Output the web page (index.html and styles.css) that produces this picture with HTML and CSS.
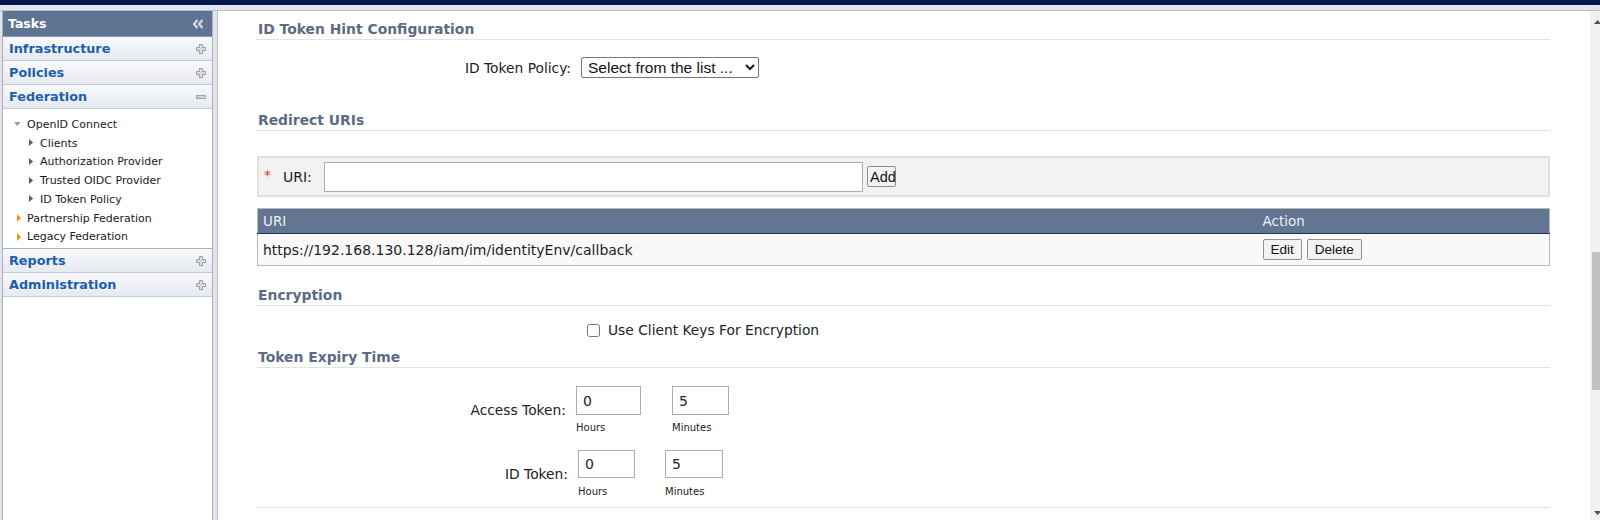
FILE: index.html
```html
<!DOCTYPE html>
<html lang="en">
<head>
<meta charset="utf-8">
<title>Federation - OpenID Connect</title>
<link rel="stylesheet" href="styles.css">
</head>
<body>
<div class="topbar"></div>
<div class="subbar"></div>
<div class="layout">
  <aside class="sidebar">
    <div class="tasks">
      <span>Tasks</span>
      <svg class="collapse" width="12" height="10" viewBox="0 0 12 10"><polyline points="5.5,1 2,5 5.5,9" fill="none" stroke="#d7dde6" stroke-width="2.2"/><polyline points="10.5,1 7,5 10.5,9" fill="none" stroke="#d7dde6" stroke-width="2.2"/></svg>
    </div>
    <div class="nav-row"><span>Infrastructure</span><svg class="plus" width="10" height="10" viewBox="0 0 10 10"><path d="M3.5 0.5h3v3h3v3h-3v3h-3v-3h-3v-3h3z" fill="#dcdcdc" stroke="#9d9d9d"/></svg></div>
    <div class="nav-row"><span>Policies</span><svg class="plus" width="10" height="10" viewBox="0 0 10 10"><path d="M3.5 0.5h3v3h3v3h-3v3h-3v-3h-3v-3h3z" fill="#dcdcdc" stroke="#9d9d9d"/></svg></div>
    <div class="nav-row"><span>Federation</span><svg class="plus" width="10" height="10" viewBox="0 0 10 10"><rect x="0.5" y="3.5" width="9" height="3" fill="#d0d0d0" stroke="#a3a3a3"/></svg></div>
    <div class="tree">
      <div class="tree-item lvl1"><span class="ti"><svg width="14" height="10" viewBox="0 0 14 10"><polygon points="2,3 8.5,3 5.25,7" fill="#9b9b9b"/></svg></span>OpenID Connect</div>
      <div class="tree-item lvl2"><span class="ti"><svg width="14" height="10" viewBox="0 0 14 10"><polygon points="4,1 8,4.5 4,8" fill="#5a5a5a"/></svg></span>Clients</div>
      <div class="tree-item lvl2"><span class="ti"><svg width="14" height="10" viewBox="0 0 14 10"><polygon points="4,1 8,4.5 4,8" fill="#5a5a5a"/></svg></span>Authorization Provider</div>
      <div class="tree-item lvl2"><span class="ti"><svg width="14" height="10" viewBox="0 0 14 10"><polygon points="4,1 8,4.5 4,8" fill="#5a5a5a"/></svg></span>Trusted OIDC Provider</div>
      <div class="tree-item lvl2"><span class="ti"><svg width="14" height="10" viewBox="0 0 14 10"><polygon points="4,1 8,4.5 4,8" fill="#5a5a5a"/></svg></span>ID Token Policy</div>
      <div class="tree-item lvl1"><span class="ti"><svg width="14" height="10" viewBox="0 0 14 10"><polygon points="5,1 9,5 5,9" fill="#f29416"/></svg></span>Partnership Federation</div>
      <div class="tree-item lvl1"><span class="ti"><svg width="14" height="10" viewBox="0 0 14 10"><polygon points="5,1 9,5 5,9" fill="#f29416"/></svg></span>Legacy Federation</div>
    </div>
    <div class="nav-row"><span>Reports</span><svg class="plus" width="10" height="10" viewBox="0 0 10 10"><path d="M3.5 0.5h3v3h3v3h-3v3h-3v-3h-3v-3h3z" fill="#dcdcdc" stroke="#9d9d9d"/></svg></div>
    <div class="nav-row"><span>Administration</span><svg class="plus" width="10" height="10" viewBox="0 0 10 10"><path d="M3.5 0.5h3v3h3v3h-3v3h-3v-3h-3v-3h3z" fill="#dcdcdc" stroke="#9d9d9d"/></svg></div>
  </aside>

  <main class="main">
    <div class="content">
      <h2 class="section-title first">ID Token Hint Configuration</h2>
      <div class="policy-row">
        <label class="form-label policy-label">ID Token Policy:</label>
        <select class="select"><option>Select from the list ...</option></select>
      </div>

      <h2 class="section-title redirect">Redirect URIs</h2>
      <div class="uri-box">
        <span class="req">*</span>
        <label class="uri-label">URI:</label>
        <input class="uri-input" type="text">
        <button class="btn add-btn">Add</button>
      </div>
      <table class="uri-table">
        <thead>
          <tr><th class="col-uri">URI</th><th class="col-action">Action</th></tr>
        </thead>
        <tbody>
          <tr><td class="col-uri">https://192.168.130.128/iam/im/identityEnv/callback</td><td class="col-action"><button class="btn">Edit</button><button class="btn">Delete</button></td></tr>
        </tbody>
      </table>

      <h2 class="section-title enc">Encryption</h2>
      <div class="check-row">
        <input class="check" type="checkbox">
        <span>Use Client Keys For Encryption</span>
      </div>

      <h2 class="section-title expiry">Token Expiry Time</h2>
      <div class="token-row access">
        <label class="form-label access-label">Access Token:</label>
        <div class="field f-a1"><input class="num" type="text" value="0"><span class="cap">Hours</span></div>
        <div class="field f-a2"><input class="num" type="text" value="5"><span class="cap">Minutes</span></div>
      </div>
      <div class="token-row idtok">
        <label class="form-label id-label">ID Token:</label>
        <div class="field f-i1"><input class="num" type="text" value="0"><span class="cap">Hours</span></div>
        <div class="field f-i2"><input class="num" type="text" value="5"><span class="cap">Minutes</span></div>
      </div>
      <div class="bottom-line"></div>
    </div>

    <div class="scrollbar">
      <svg class="arrow-up" width="7" height="4" viewBox="0 0 7 4"><polygon points="0,4 3.5,0 7,4" fill="#505050"/></svg>
      <div class="thumb"></div>
      <div class="spacer"></div>
      <svg class="arrow-down" width="7" height="4" viewBox="0 0 7 4"><polygon points="0,0 7,0 3.5,4" fill="#505050"/></svg>
    </div>
  </main>
</div>
</body>
</html>
```

FILE: styles.css
```css
* { box-sizing: border-box; }
html, body { margin: 0; height: 100%; }
body {
  background: #e1e5eb;
  font-family: "DejaVu Sans", Verdana, sans-serif;
  color: #222;
  overflow: hidden;
}
.topbar { height: 5px; background: #03184a; }
.subbar { height: 6px; background: #e2e6ec; border-bottom: 1px solid #b6becb; }

.layout { display: flex; height: 509px; padding-left: 2px; }

/* ---------- sidebar ---------- */
.sidebar {
  width: 211px;
  flex: none;
  margin-right: 4px;
  background: #fff;
  border-left: 1px solid #a9b0bc;
  border-right: 1px solid #a9b0bc;
}
.tasks {
  height: 26px;
  background: #5f7393;
  color: #fff;
  font-weight: bold;
  font-size: 12.5px;
  display: flex;
  align-items: center;
  justify-content: space-between;
  padding: 0 8px 0 5px;
  border-bottom: 1px solid #8b97ab;
}
.nav-row {
  height: 24px;
  display: flex;
  align-items: center;
  justify-content: space-between;
  padding: 0 6px 0 6px;
  background: linear-gradient(#f8f9fb, #e6e9f0);
  border-bottom: 1px solid #c4cad5;
  color: #1d5ead;
  font-weight: bold;
  font-size: 12.8px;
}
.plus { display: block; }

.tree {
  height: 140px;
  padding-top: 6px;
  border-bottom: 1px solid #a9b0bc;
  font-size: 11px;
  color: #1a1a1a;
}
.tree-item { display: flex; align-items: center; height: 18.75px; white-space: nowrap; }
.tree-item.lvl1 { padding-left: 9px; }
.tree-item.lvl2 { padding-left: 22px; }
.ti { width: 14px; height: 10px; display: flex; margin-right: 1px; }

/* ---------- main ---------- */
.main {
  flex: 1;
  display: flex;
  background: #fff;
  border-left: 1px solid #b9c0cc;
}
.content { flex: 1; padding: 0 40px 0 38px; }

.section-title {
  margin: 0;
  font-size: 13.9px;
  line-height: 16px;
  font-weight: bold;
  color: #5b6b86;
  padding: 0 0 2px 2px;
  border-bottom: 1px solid #e3e3e3;
}
.section-title.first { margin-top: 10px; }
.section-title.redirect { margin-top: 34px; }
.section-title.enc { margin-top: 21px; }
.section-title.expiry { margin-top: 10px; }

.form-label { font-size: 13.8px; text-align: right; color: #222; flex: none; }

.policy-row { display: flex; align-items: center; margin-top: 17px; height: 21px; }
.policy-label { width: 315px; margin-right: 10px; }
.select {
  width: 178px;
  height: 21px;
  font-family: "Liberation Sans", Arial, sans-serif;
  font-size: 15.5px;
  color: #111;
  background: #fff;
  border: 1px solid #767676;
  border-radius: 2px;
  padding: 0 2px;
  margin: 0;
}

.uri-box {
  margin: 25px 0 0 1px;
  height: 41px;
  background: #f2f2f2;
  border: 2px solid #e0e0e0;
  display: flex;
  align-items: center;
  padding-left: 5px;
  font-size: 14px;
}
.req { color: #e2362f; width: 7px; margin-right: 12px; margin-top: -3px; }
.uri-label { width: 31px; margin-right: 10px; color: #222; }
.uri-input {
  width: 539px;
  height: 30px;
  border: 1px solid #adadad;
  background: #fff;
  margin: 0 4px 0 0;
  padding: 0 4px;
}
.btn {
  font-family: "Liberation Sans", Arial, sans-serif;
  font-size: 13.5px;
  color: #111;
  background: #f3f3f3;
  border: 1px solid #8f8f8f;
  border-radius: 2px;
  padding: 0 7px;
  height: 21px;
  margin: 0;
}
.add-btn { font-size: 14.5px; padding: 0 2px; height: 21px; width: 29px; }

.uri-table {
  margin: 11px 0 0 1px;
  width: 1293px;
  border-collapse: collapse;
  border: 1px solid #b8b8b8;
}
.uri-table th {
  height: 25px;
  background: #627592;
  color: #eef1f6;
  font-weight: normal;
  font-size: 13.5px;
  text-align: left;
  padding: 0 5px;
  border-bottom: 1px solid #1e3458;
}
.uri-table td {
  height: 32px;
  background: #f9f9f9;
  font-size: 14px;
  color: #222;
  padding: 0 5px;
}
.uri-table .col-action { width: 292px; }
.uri-table td.col-action .btn + .btn { margin-left: 5px; }

.check-row {
  display: flex;
  align-items: center;
  margin-top: 15px;
  height: 18px;
  padding-left: 331px;
  font-size: 13.8px;
}
.check { width: 13px; height: 13px; margin: 0 8px 0 0; }

.token-row { display: flex; align-items: center; }
.token-row.access { margin-top: 18px; }
.token-row.idtok { margin-top: 16px; }
.access-label { width: 310px; margin-right: 10px; }
.id-label { width: 312px; margin-right: 10px; }
.field { display: flex; flex-direction: column; align-items: flex-start; }
.num {
  height: 29px;
  border: 1px solid #adadad;
  background: #fff;
  margin: 0;
  padding: 0 6px;
  font-family: "DejaVu Sans", Verdana, sans-serif;
  font-size: 14px;
  color: #222;
}
.cap { font-size: 10px; line-height: 12px; margin-top: 7px; color: #222; }
.f-a1 .num { width: 65px; }
.f-a1 { margin-right: 31px; }
.f-a2 .num { width: 57px; }
.f-i1 .num { width: 57px; height: 28px; }
.f-i1 { margin-right: 30px; }
.f-i2 .num { width: 58px; height: 28px; }
.idtok .cap { margin-top: 8px; }

.bottom-line { margin-top: 9px; border-top: 1px solid #e3e3e3; }

/* ---------- scrollbar ---------- */
.scrollbar {
  width: 12px;
  flex: none;
  background: #f1f1f1;
  display: flex;
  flex-direction: column;
  align-items: center;
}
.arrow-up { margin-top: 9px; margin-left: 2px; flex: none; }
.thumb { width: 10px; height: 138px; margin-top: 228px; margin-left: 2px; background: #c1c1c1; flex: none; }
.spacer { flex: 1; }
.arrow-down { margin-bottom: 5px; margin-left: 2px; flex: none; }
```
